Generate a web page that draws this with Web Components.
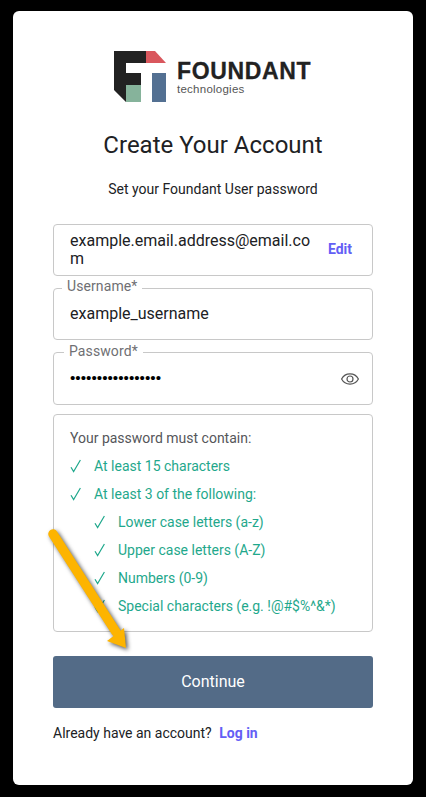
<!DOCTYPE html>
<html><head><meta charset="utf-8">
<style>
html,body{margin:0;padding:0;background:#000;}
body{width:426px;height:797px;overflow:hidden;font-family:Roboto,sans-serif;}
</style></head><body>
<template id="t-logo"><style>
:host{display:flex;justify-content:center;height:52px}
.w{display:flex;align-items:flex-start;position:relative;width:198px;height:52px}
.t{display:flex;flex-direction:column;margin-left:11px;padding-top:10px;margin-right:-10px}
.f{font:700 23px/20px "Liberation Sans",sans-serif;color:#222;letter-spacing:.65px;-webkit-text-stroke:.3px #222;white-space:nowrap}
.s{font:400 11.5px/12px "Liberation Sans",sans-serif;color:#555;margin-top:2px;letter-spacing:.25px}
svg{flex:none}
</style><div class="w"><svg width="52" height="52" viewBox="0 0 52 52">
<polygon points="0,0 32,0 32,12 12,12 12,22 27,22 27,34 12,34 12,51 0,39" fill="#222"/>
<polygon points="32,0 41,0 52,12 32,12" fill="#d9575d"/>
<rect x="12" y="34" width="15" height="17" fill="#86b39b"/>
<rect x="38" y="22" width="14" height="29" fill="#537092"/>
</svg><div class="t"><span class="f">FOUNDANT</span><span class="s">technologies</span></div></div></template>

<template id="t-field"><style>
:host{display:block;position:relative;box-sizing:border-box;border:1px solid #c8c8c8;border-radius:4px;background:#fff}
.l{position:absolute;top:var(--lt,-10px);left:var(--lx,8px);padding:0 5px;background:#fff;font-size:14px;line-height:16px;color:#6f6f73;letter-spacing:.1px}
.c{display:flex;align-items:center;height:100%;padding:var(--pad,0 16px);box-sizing:border-box;font-size:16px;line-height:var(--lh,19px);color:#202124}
.m{flex:1;min-width:0;word-break:break-all}
</style><span class="l" part="l"><slot name="label"></slot></span><div class="c"><div class="m"><slot></slot></div><slot name="end"></slot></div></template>

<template id="t-check"><style>
:host{display:flex;align-items:center;height:28px;font-size:14px;color:#1fa88c;padding-left:var(--ind,0)}
svg{width:12px;height:14px;margin-right:12px;flex:none}
</style><svg viewBox="0 0 12 14"><path d="M1 8.2 L3.6 12.6 L10.4 1" fill="none" stroke="#1fa88c" stroke-width="1.2"/></svg><slot></slot></template>

<template id="t-reqs"><style>
:host{display:block;box-sizing:border-box;height:218px;border:1px solid #c8c8c8;border-radius:4px;padding:10px 16px 0;background:#fff}
.h{font-size:14px;line-height:26px;color:#55565a;height:27px}
</style><div class="h"><slot name="head"></slot></div><slot></slot></template>

<template id="t-card"><style>
:host{display:block;position:absolute;left:13px;top:11px;width:400px;height:774px;background:#fff;border-radius:6px;box-sizing:border-box;padding:40px 40px 0}
h1{margin:26px 0 0;font-size:24px;font-weight:400;line-height:32px;text-align:center;color:#202124}
p{margin:18px 0 0;font-size:14px;line-height:20px;text-align:center;color:#202124}
.stack{display:flex;flex-direction:column;margin-top:25px}
.btn{display:flex;align-items:center;justify-content:center;height:52px;padding-bottom:2px;box-sizing:border-box;margin-top:24px;background:#536b87;border-radius:3px;color:#fff;font-size:16px}
.foot{margin-top:16px;font-size:14px;line-height:18px;color:#202124}
a{color:#635ff5;font-weight:700;margin-left:4px;text-decoration:none}
</style><foundant-logo></foundant-logo>
<h1>Create Your Account</h1><p>Set your Foundant User password</p>
<div class="stack"><slot></slot></div>
<div class="btn">Continue</div>
<div class="foot">Already have an account? <a>Log in</a></div></template>

<template id="t-arrow"><style>
:host{display:block;position:absolute;left:40px;top:520px;width:100px;height:140px;pointer-events:none}
svg{overflow:visible;filter:drop-shadow(2px 2px 2px rgba(0,0,0,.65))}
</style><svg width="100" height="140" viewBox="0 0 100 140">
<path d="M13 14 L76 112" stroke="#fdb400" stroke-width="9.5" stroke-linecap="round" fill="none"/>
<polygon points="86,128 67,121 84,108" fill="#fdb400"/>
</svg></template>

<foundant-card>
  <foundant-field style="height:52px;--pad:0 16px;--lh:18.5px" id="e">example.email.address@email.com<b slot="end" style="color:#635ff5;font-size:14px;font-weight:700;margin-left:16px;margin-right:4px;position:relative;top:-1px">Edit</b></foundant-field>
  <foundant-field style="height:52px;margin-top:12px;--lx:8px;--lt:-11px;--pad:0 16px 2px"><span slot="label">Username*</span>example_username</foundant-field>
  <foundant-field style="height:53px;margin-top:12px;--lx:10px"><span slot="label">Password*</span><span style="font-size:15.3px;letter-spacing:0;font-family:'Liberation Sans',sans-serif;color:#000;position:relative;top:-1px">•••••••••••••••••</span><svg slot="end" width="18" height="18" viewBox="0 0 18 18" style="margin-right:-3px"><path d="M.6 9C2.4 5.6 5.4 3.9 9 3.9S15.6 5.6 17.4 9C15.6 12.4 12.6 14.1 9 14.1S2.4 12.4.6 9Z" fill="none" stroke="#555" stroke-width="1.2"/><circle cx="9" cy="9" r="3" fill="none" stroke="#555" stroke-width="1.2"/></svg></foundant-field>
  <foundant-reqs style="margin-top:9px">
    <span slot="head">Your password must contain:</span>
    <foundant-check>At least 15 characters</foundant-check>
    <foundant-check>At least 3 of the following:</foundant-check>
    <foundant-check style="--ind:24px">Lower case letters (a-z)</foundant-check>
    <foundant-check style="--ind:24px">Upper case letters (A-Z)</foundant-check>
    <foundant-check style="--ind:24px">Numbers (0-9)</foundant-check>
    <foundant-check style="--ind:24px">Special characters (e.g. !@#$%^&amp;*)</foundant-check>
  </foundant-reqs>
</foundant-card>
<foundant-arrow></foundant-arrow>
<script>
for (const [tag,id] of [['foundant-logo','t-logo'],['foundant-field','t-field'],['foundant-check','t-check'],['foundant-reqs','t-reqs'],['foundant-card','t-card'],['foundant-arrow','t-arrow']]) {
  customElements.define(tag, class extends HTMLElement {
    constructor(){super();this.attachShadow({mode:'open'}).appendChild(document.getElementById(id).content.cloneNode(true));}
  });
}
</script>
</body></html>
